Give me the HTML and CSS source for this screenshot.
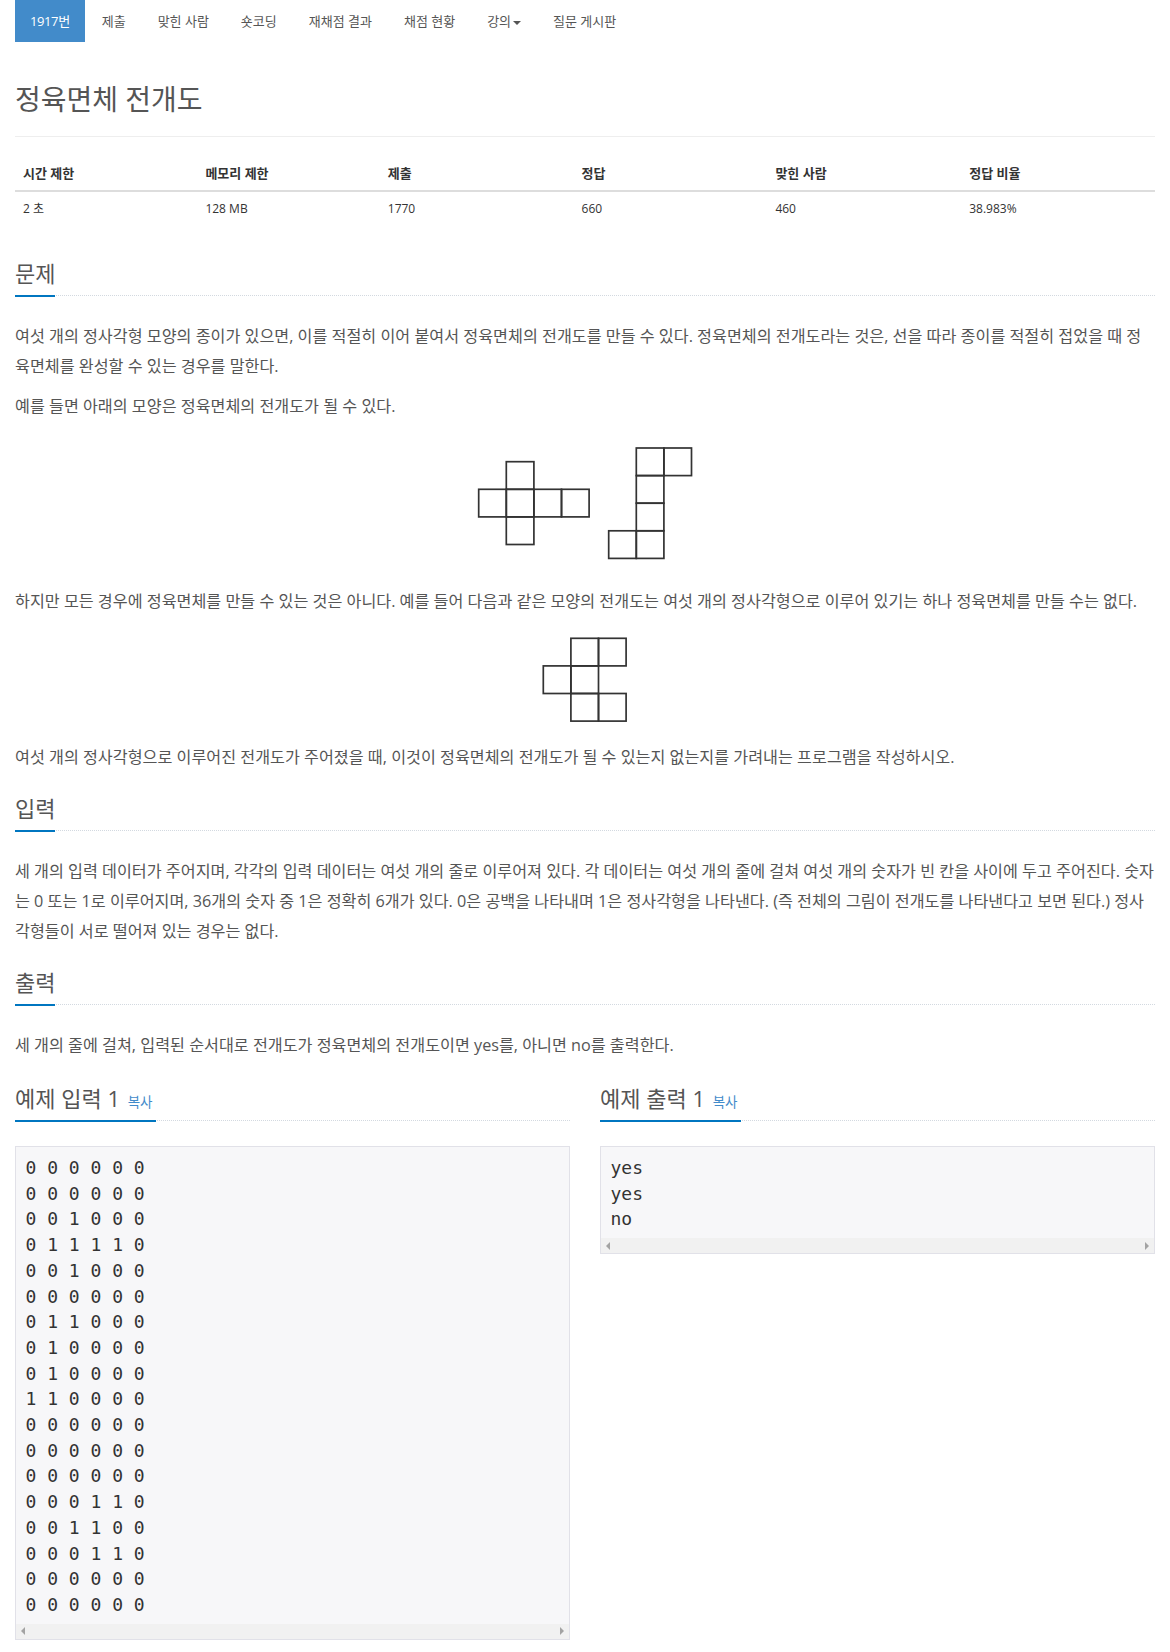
FILE: index.html
```html
<!DOCTYPE html>
<html lang="ko">
<head>
<meta charset="utf-8">
<title>정육면체 전개도</title>
<link rel="stylesheet" href="styles.css">
</head>
<body>
<div class="container">
  <ul class="nav">
    <li class="active"><a>1917번</a></li>
    <li><a>제출</a></li>
    <li><a>맞힌 사람</a></li>
    <li><a>숏코딩</a></li>
    <li><a>재채점 결과</a></li>
    <li><a>채점 현황</a></li>
    <li><a>강의<span class="caret"></span></a></li>
    <li><a>질문 게시판</a></li>
  </ul>

  <div class="page-header">
    <h1 class="title">정육면체 전개도</h1>
  </div>

  <table class="info">
    <thead>
      <tr>
        <th class="w16">시간 제한</th>
        <th class="w16">메모리 제한</th>
        <th class="w17">제출</th>
        <th class="w17">정답</th>
        <th class="w17">맞힌 사람</th>
        <th class="w17">정답 비율</th>
      </tr>
    </thead>
    <tbody>
      <tr>
        <td>2 초</td>
        <td>128 MB</td>
        <td>1770</td>
        <td>660</td>
        <td>460</td>
        <td>38.983%</td>
      </tr>
    </tbody>
  </table>

  <section class="sec">
    <div class="headline"><h2>문제</h2></div>
    <div class="text">
      <p>여섯 개의 정사각형 모양의 종이가 있으면, 이를 적절히 이어 붙여서 정육면체의 전개도를 만들 수 있다. 정육면체의 전개도라는 것은, 선을 따라 종이를 적절히 접었을 때 정육면체를 완성할 수 있는 경우를 말한다.</p>
      <p>예를 들면 아래의 모양은 정육면체의 전개도가 될 수 있다.</p>
      <div class="fig fig1">
        <svg width="222" height="145" viewBox="0 0 222 145">
          <g fill="none" stroke="#333" stroke-width="1.7">
            <rect x="32.3" y="30.7" width="27.6" height="27.6"/>
            <rect x="4.7" y="58.3" width="27.6" height="27.6"/>
            <rect x="32.3" y="58.3" width="27.6" height="27.6"/>
            <rect x="59.9" y="58.3" width="27.6" height="27.6"/>
            <rect x="87.5" y="58.3" width="27.6" height="27.6"/>
            <rect x="32.3" y="85.9" width="27.6" height="27.6"/>
            <rect x="162.3" y="17" width="27.6" height="27.6"/>
            <rect x="189.9" y="17" width="27.6" height="27.6"/>
            <rect x="162.3" y="44.6" width="27.6" height="27.6"/>
            <rect x="162.3" y="72.2" width="27.6" height="27.6"/>
            <rect x="134.7" y="99.8" width="27.6" height="27.6"/>
            <rect x="162.3" y="99.8" width="27.6" height="27.6"/>
          </g>
        </svg>
      </div>
      <p>하지만 모든 경우에 정육면체를 만들 수 있는 것은 아니다. 예를 들어 다음과 같은 모양의 전개도는 여섯 개의 정사각형으로 이루어 있기는 하나 정육면체를 만들 수는 없다.</p>
      <div class="fig fig2">
        <svg width="100" height="106" viewBox="0 0 100 106">
          <g fill="none" stroke="#333" stroke-width="1.7">
            <rect x="35.9" y="12.3" width="27.6" height="27.6"/>
            <rect x="63.5" y="12.3" width="27.6" height="27.6"/>
            <rect x="8.3" y="39.9" width="27.6" height="27.6"/>
            <rect x="35.9" y="39.9" width="27.6" height="27.6"/>
            <rect x="35.9" y="67.5" width="27.6" height="27.6"/>
            <rect x="63.5" y="67.5" width="27.6" height="27.6"/>
          </g>
        </svg>
      </div>
      <p>여섯 개의 정사각형으로 이루어진 전개도가 주어졌을 때, 이것이 정육면체의 전개도가 될 수 있는지 없는지를 가려내는 프로그램을 작성하시오.</p>
    </div>
  </section>

  <section class="sec">
    <div class="headline"><h2>입력</h2></div>
    <div class="text">
      <p>세 개의 입력 데이터가 주어지며, 각각의 입력 데이터는 여섯 개의 줄로 이루어져 있다. 각 데이터는 여섯 개의 줄에 걸쳐 여섯 개의 숫자가 빈 칸을 사이에 두고 주어진다. 숫자는 0 또는 1로 이루어지며, 36개의 숫자 중 1은 정확히 6개가 있다. 0은 공백을 나타내며 1은 정사각형을 나타낸다. (즉 전체의 그림이 전개도를 나타낸다고 보면 된다.) 정사각형들이 서로 떨어져 있는 경우는 없다.</p>
    </div>
  </section>

  <section class="sec">
    <div class="headline"><h2>출력</h2></div>
    <div class="text">
      <p>세 개의 줄에 걸쳐, 입력된 순서대로 전개도가 정육면체의 전개도이면 yes를, 아니면 no를 출력한다.</p>
    </div>
  </section>

  <div class="samples">
    <section class="sample">
      <div class="headline"><h2>예제 입력 1 <span class="copy">복사</span></h2></div>
      <div class="sample-box">
        <pre class="sampledata">0 0 0 0 0 0
0 0 0 0 0 0
0 0 1 0 0 0
0 1 1 1 1 0
0 0 1 0 0 0
0 0 0 0 0 0
0 1 1 0 0 0
0 1 0 0 0 0
0 1 0 0 0 0
1 1 0 0 0 0
0 0 0 0 0 0
0 0 0 0 0 0
0 0 0 0 0 0
0 0 0 1 1 0
0 0 1 1 0 0
0 0 0 1 1 0
0 0 0 0 0 0
0 0 0 0 0 0</pre>
        <div class="hscroll"><span class="arr arr-l"></span><span class="arr arr-r"></span></div>
      </div>
    </section>
    <section class="sample">
      <div class="headline"><h2>예제 출력 1 <span class="copy">복사</span></h2></div>
      <div class="sample-box">
        <pre class="sampledata">yes
yes
no</pre>
        <div class="hscroll"><span class="arr arr-l"></span><span class="arr arr-r"></span></div>
      </div>
    </section>
  </div>
</div>
</body>
</html>
```

FILE: styles.css
```css
html, body {
  margin: 0;
  padding: 0;
  background: #fff;
}

body {
  font-family: "Open Sans", "Noto Sans CJK KR", sans-serif;
  font-size: 13px;
  color: #333;
}

.container {
  width: 1140px;
  padding: 0 15px;
}

/* nav pills */
.nav {
  list-style: none;
  margin: 0;
  padding: 0;
  display: flex;
}

.nav li + li {
  margin-left: 2px;
}

.nav a {
  display: block;
  padding: 10px 15px;
  line-height: 22px;
  font-size: 13px;
  color: #555;
}

.nav li.active a {
  background: #428bca;
  color: #fff;
  letter-spacing: -0.4px;
}

.caret {
  display: inline-block;
  width: 0;
  height: 0;
  margin-left: 2px;
  vertical-align: middle;
  border-top: 4px solid #555;
  border-left: 4px solid transparent;
  border-right: 4px solid transparent;
}

/* page header */
.page-header {
  margin: 41px 0 20px;
  padding-bottom: 21px;
  border-bottom: 1px solid #eee;
}

.title {
  margin: 0;
  font-size: 28px;
  font-weight: 400;
  line-height: 32px;
  color: #555;
}

/* info table */
.info {
  width: 100%;
  border-collapse: collapse;
  margin-bottom: 32px;
}

.info th,
.info td {
  padding: 8px;
  line-height: 17px;
  text-align: left;
  color: #333;
}

.info th {
  font-size: 13px;
  font-weight: 700;
  border-bottom: 2px solid #ddd;
  vertical-align: bottom;
}

.info td {
  font-size: 12px;
  border-top: 1px solid #ddd;
}

.w16 { width: 16%; }
.w17 { width: 17%; }

/* headline */
.headline {
  margin: 20px 0 25px;
  border-bottom: 1px dotted #d3d9e0;
}

.headline h2 {
  display: inline-block;
  margin: 0 0 -2px;
  padding-bottom: 5px;
  border-bottom: 2px solid #0076c0;
  font-size: 22px;
  font-weight: 400;
  line-height: 33px;
  color: #555;
}

.copy {
  font-size: 13.5px;
  line-height: 1;
  color: #428bca;
  padding: 0 3px 0 2px;
}

/* problem text */
.text p {
  margin: 0 0 10px;
  font-size: 16.2px;
  line-height: 30px;
  color: #555;
}

.fig {
  margin: 0 0 10px;
}

.fig svg {
  display: block;
  margin: 0 auto;
}

/* samples */
.samples {
  display: grid;
  grid-template-columns: 555px 555px;
  column-gap: 30px;
}

.sample .headline {
  margin-top: 12px;
}

.sample-box {
  border: 1px solid #e1e1e8;
  background: #f7f7f9;
  margin-bottom: 10px;
}

.sampledata {
  margin: 0;
  padding: 8px 9.5px 6px;
  font-family: "DejaVu Sans Mono", monospace;
  font-size: 18px;
  line-height: 25.71px;
  color: #333;
  overflow: hidden;
}

.hscroll {
  height: 15px;
  background: #f1f1f1;
  display: flex;
  justify-content: space-between;
  align-items: center;
  padding: 0 5px;
}

.arr {
  width: 0;
  height: 0;
  border-top: 4px solid transparent;
  border-bottom: 4px solid transparent;
}

.arr-l {
  border-right: 4px solid #a3a3a3;
}

.arr-r {
  border-left: 4px solid #a3a3a3;
}
```
